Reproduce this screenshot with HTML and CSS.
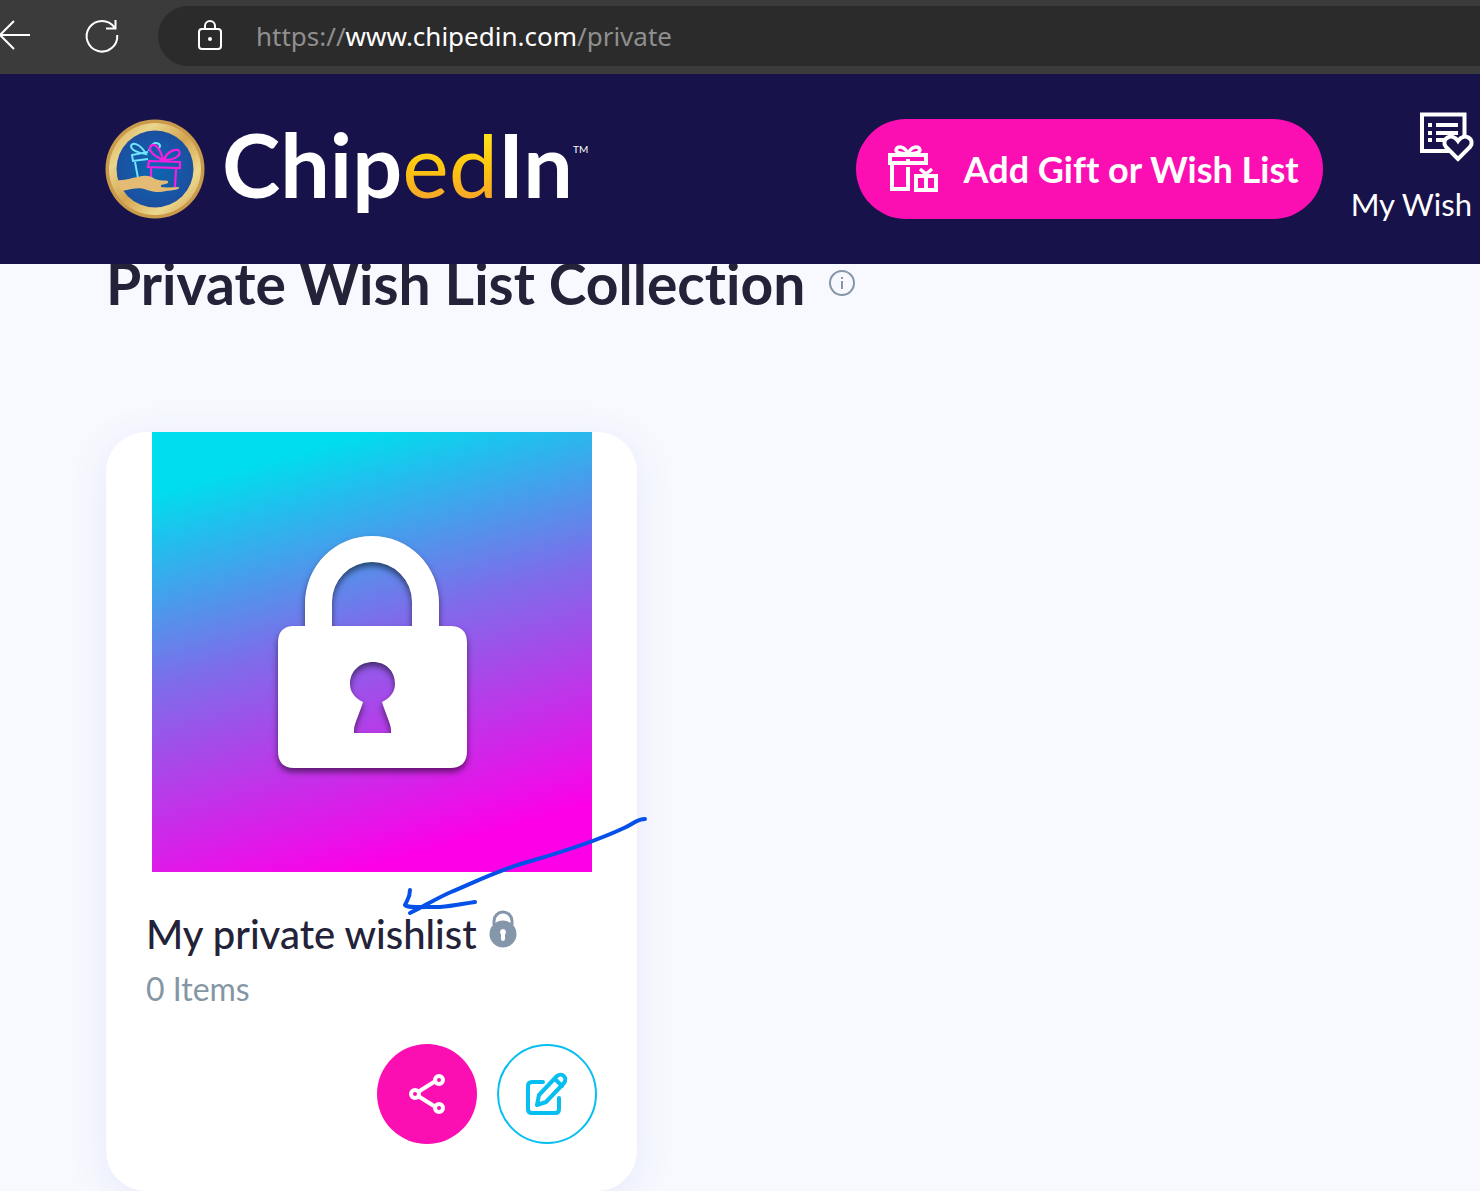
FILE: index.html
```html
<!DOCTYPE html>
<html lang="en">
<head>
<meta charset="utf-8">
<meta name="viewport" content="width=device-width, initial-scale=1">
<title>Private Wish List Collection</title>
<link rel="stylesheet" href="styles.css">
</head>
<body>
<div class="browser-bar">
  <button class="browser-button" type="button" aria-label="Back">
    <svg width="32" height="32" viewBox="0 0 32 32"><path d="M30 15H1M14 1L0 15l14 14"/></svg>
  </button>
  <button class="browser-button" type="button" aria-label="Reload">
    <svg width="34" height="34" viewBox="1 0 34 34"><path d="M32.200 16A15.300 15.300 0 1 1 29.500 8.500M30.500 1v8.500H21"/></svg>
  </button>
  <div class="address">
    <svg class="address-lock" width="26" height="32" viewBox="0 0 26 32"><rect x="2" y="9" width="22" height="20" rx="3"/><path d="M8 9V6a5 5 0 0 1 10 0v3"/><circle class="dot" cx="13" cy="19" r="2"/></svg>
    <div class="url">https://<span class="url-host">www.chipedin.com</span>/private</div>
  </div>
</div>

<header class="site-header">
  <a class="brand" href="#">
    <svg class="brand-coin" width="100" height="100" viewBox="0 0 100 100" aria-hidden="true">
      <defs>
        <linearGradient id="gold" x1="0" y1="0" x2="1" y2="1">
          <stop offset="0" stop-color="#d9ab55"/><stop offset=".25" stop-color="#e9d58c"/><stop offset=".5" stop-color="#d6a652"/><stop offset=".75" stop-color="#ecd98f"/><stop offset="1" stop-color="#cf9c49"/>
        </linearGradient>
        <radialGradient id="blue"><stop offset="0" stop-color="#0b68b4"/><stop offset="1" stop-color="#1c4f9f"/></radialGradient>
      </defs>
      <circle cx="49" cy="50" r="49.500" fill="#c99a4b"/>
      <circle cx="49" cy="50" r="46" fill="url(#gold)"/>
      <circle cx="49" cy="50" r="38.500" fill="url(#blue)"/>
      <g fill="none" stroke="#6fe6fb" stroke-width="2">
        <path d="M42 40L27 42l-1-6 16-3M29 43l3 16M40 35C32 34 25 31 25 27c1-4 9-3 15 8zM43 32c2-8 6-9 10-7 2 2 1 3 0 4"/>
      </g>
      <g fill="none" stroke="#f51fe0" stroke-width="2.200">
        <path d="M43 42l31 1v6l-32-1zM45 49v11M70 50l-1 18M57 41C48 37 43 33 44 28c3-5 10-1 13 13zM58 41c2-7 9-11 14-10 5 4-2 10-14 10z"/>
      </g>
      <path d="M10 61c9 1 14-2 22-3 6-2 12-2 17 2 5 2 10 1 13 2 1 2-1 3-7 4l0 2c6 1 12 0 18 0 1 3-6 3-13 4-6 2-13 1-19-1-6-3-13-2-25 1z" fill="#e3bb75"/>
    </svg>
    <span class="brand-name">Chip<span class="brand-accent">ed</span>In</span><span class="brand-mark">TM</span>
  </a>
  <nav class="site-nav">
    <button class="add-button" type="button">
      <svg width="50" height="48" viewBox="0 0 50 48" aria-hidden="true"><g fill="none" stroke="#fff" stroke-width="4"><path d="M2 10h36v8H2zM4 18v26h16M20 22v24M28 31h20v14H28zM38 31v14"/><path stroke-width="3.500" d="M20 9C16 9 8 8 8 5c1-5 9-4 12 4zM20 9c4 0 12-1 12-4-1-5-9-4-12 4zM32 24l6 5 6-5"/></g><path fill="#fff" d="M18 14h4v3h-4z"/></svg>
      <span>Add Gift or Wish List</span>
    </button>
    <a class="nav-link" href="#">
      <svg width="54" height="52" viewBox="0 0 54 52" aria-hidden="true"><path d="M2 2.500h42.500V39H2z" fill="none" stroke="#fff" stroke-width="4"/><path d="M8 13h4M16 13h22M8 21h4M16 21h22M8 28h4M16 28h10" stroke="#fff" stroke-width="4"/><path d="M38 47L26 35c-6-8 6-15 12-6 6-9 18-2 12 6z" fill="#17124a" stroke="#fff" stroke-width="4"/></svg>
      <span>My Wish</span>
    </a>
  </nav>
</header>

<main class="page">
  <div class="page-head">
    <h1 class="page-title">Private Wish List Collection</h1>
    <button class="info-button" type="button" aria-label="About this collection">
      <svg width="28" height="28" viewBox="0 0 28 28"><circle cx="14" cy="14" r="12" fill="none" stroke="#8496aa" stroke-width="2"/><path d="M14 12v8M14 8v2" stroke="#8496aa" stroke-width="2"/></svg>
    </button>
  </div>

  <section class="collection">
    <article class="card">
      <div class="cover">
        <svg width="220" height="260" viewBox="-1 1 220 260" role="img" aria-label="Padlock">
          <path fill="#fff" fill-rule="evenodd" d="M42 105V82a67 67 0 0 1 134 0v23h11q17 0 17 17v108q0 17-17 17H31q-16 0-16-17V122q0-17 16-17zM69 105h80V81a40 40 0 0 0-80 0zM91 212h37v-3c0-6-5-15-9-28 8-4 13-10 13-18 0-13-9-22-22-22s-23 9-23 22c0 8 5 14 13 18-4 13-9 22-9 28z"/>
        </svg>
      </div>
      <div class="card-body">
        <h2 class="card-title">My private wishlist
          <svg width="28" height="38" viewBox="0 0 28 38" aria-label="Private" role="img"><path d="M5 15V11a9 9 0 0 1 18 0v4" fill="none" stroke="#8496aa" stroke-width="3"/><circle cx="14" cy="24" r="13.500" fill="#8496aa"/><path d="M14 19a3.200 3.200 0 0 1 2 5.500V29a2 2 0 0 1-4 0v-4.500A3.200 3.200 0 0 1 14 19z" fill="#fff"/></svg>
        </h2>
        <p class="card-count">0 Items</p>
        <div class="card-actions">
          <button class="round-button share" type="button" aria-label="Share">
            <svg width="40" height="40" viewBox="0 0 40 40"><g fill="none" stroke="#fff" stroke-width="4"><path d="M11 18l16-10M11 22l16 10"/><circle cx="8" cy="20" r="4"/><circle cx="32" cy="6" r="4"/><circle cx="32" cy="34" r="4"/></g></svg>
          </button>
          <button class="round-button edit" type="button" aria-label="Edit">
            <svg width="44" height="44" viewBox="0 0 44 44"><g fill="none" stroke="#06bff0" stroke-width="4" stroke-linecap="round" stroke-linejoin="round"><path d="M18 10H7q-4 0-4 4v23q0 4 4 4h23q4 0 4-4V26"/><path d="M12 33l2-10L32 4c5-4 11 2 7 7L21 30zM30 7l7 7"/></g></svg>
          </button>
        </div>
      </div>
      <svg class="arrow" width="248" height="104" viewBox="0 0 248 104" aria-hidden="true"><path d="M243 7c-8 0-12 5-21 9-30 14-62 24-93 33-31 8-56 21-80 31-16 7-28 15-41 21M8 78c0 8-3 10-5 15 3 3 12 2 35 2 14-1 21-3 35-5"/></svg>
    </article>
  </section>
</main>
</body>
</html>
```
FILE: styles.css
```css
* { box-sizing: border-box; }

body {
  margin: 0;
  min-height: 100vh;
  overflow-x: hidden;
  background: #f8f9fe;
  color: #232239;
  font-family: Lato, "Liberation Sans", sans-serif;
  font-variant-ligatures: none;
}

button {
  border: 0;
  padding: 0;
  background: none;
  color: inherit;
  font: inherit;
  font-variant-ligatures: none;
  cursor: pointer;
}

svg { display: block; flex: none; overflow: visible; }
a { color: inherit; text-decoration: none; }

/* Browser toolbar */
.browser-bar {
  display: flex;
  align-items: center;
  height: 74px;
  padding-bottom: 2px;
  background: #3b3b3b;
}
.browser-button { margin-right: 54px; }
.browser-button + .browser-button { margin-right: 38px; }
.browser-bar svg { fill: none; stroke: #fff; stroke-width: 2; }
.browser-bar .dot { fill: #fff; stroke: none; }
.address {
  flex: 1;
  display: flex;
  align-items: center;
  gap: 33px;
  height: 60px;
  padding-left: 39px;
  border-radius: 30px 0 0 30px;
  background: #2b2b2b;
}
.url {
  color: #8f8f8f;
  font-family: "Noto Sans", "Open Sans", sans-serif;
  font-size: 26px;
}
.url-host { color: #fff; }

/* Site header */
.site-header {
  position: relative;
  z-index: 1;
  display: flex;
  align-items: center;
  height: 190px;
  padding: 0 6px 0 106px;
  background: #17124a;
  color: #fff;
}
.brand {
  flex: 1;
  display: flex;
  align-items: center;
}
.brand-name {
  margin-left: 16px;
  padding-bottom: 10px;
  font-size: 88px;
  font-weight: 700;
  line-height: 90px;
}
.brand-accent {
  background: linear-gradient(#ffe01b 25%, #fcc30f 55%, #f6a52c 85%);
  background-clip: text;
  color: transparent;
  font-weight: 400;
}
.brand-mark {
  align-self: flex-start;
  padding-top: 24px;
  font-size: 10px;
}
.site-nav {
  display: flex;
  align-items: center;
  gap: 28px;
}
.add-button {
  display: flex;
  align-items: center;
  gap: 26px;
  height: 100px;
  padding: 0 24px 0 32px;
  border-radius: 50px;
  background: #fb0fb2;
  font-size: 36px;
  font-weight: 700;
  white-space: nowrap;
}
.nav-link {
  display: flex;
  flex-direction: column;
  align-items: flex-end;
  gap: 20px;
  min-width: 122px;
  padding-bottom: 2px;
  font-size: 31px;
  line-height: 40px;
  white-space: nowrap;
}
.nav-link span { padding-right: 2px; }

/* Collection page */
.page { padding: 0 106px; }
.page-head {
  display: flex;
  align-items: center;
  gap: 23px;
  height: 38px;
}
.page-title {
  margin: 0;
  font-size: 57px;
  font-weight: 700;
  line-height: 38px;
  white-space: nowrap;
}
.collection {
  display: grid;
  grid-template-columns: repeat(auto-fill, minmax(min(100%, 531px), 531px));
  gap: 40px;
  padding-top: 130px;
}
.card {
  position: relative;
  border-radius: 40px;
  background: #fff;
  box-shadow: 0 8px 40px #e5e9fc;
}
.cover {
  display: grid;
  place-items: center;
  width: 440px;
  max-width: 100%;
  aspect-ratio: 1;
  margin: 0 auto;
  background: linear-gradient(164deg, #00ddee 11%, #7d6dea 45%, #fd00e8 88%);
}
.cover svg { filter: drop-shadow(0 4px 3px #0008); }
.card-body { padding: 38px 40px 47px; }
.card-title {
  display: flex;
  align-items: center;
  gap: 12px;
  margin: 0 0 11px;
  font-size: 40px;
  font-weight: 500;
  line-height: 48px;
}
.card-title svg { align-self: flex-start; }
.card-count {
  margin: 0 0 35px;
  color: #8496a4;
  font-size: 32px;
  line-height: 40px;
}
.card-actions {
  display: flex;
  justify-content: flex-end;
  gap: 20px;
}
.round-button {
  display: grid;
  place-items: center;
  width: 100px;
  height: 100px;
  border-radius: 50%;
}
.share { background: #fb0fb2; }
.edit { border: 2px solid #06bff0; }

/* Hand-drawn pointer over the card */
.arrow {
  position: absolute;
  left: 296px;
  top: 380px;
  pointer-events: none;
}
.arrow path {
  fill: none;
  stroke: #0450e8;
  stroke-width: 4;
  stroke-linecap: round;
  stroke-linejoin: round;
}
```
